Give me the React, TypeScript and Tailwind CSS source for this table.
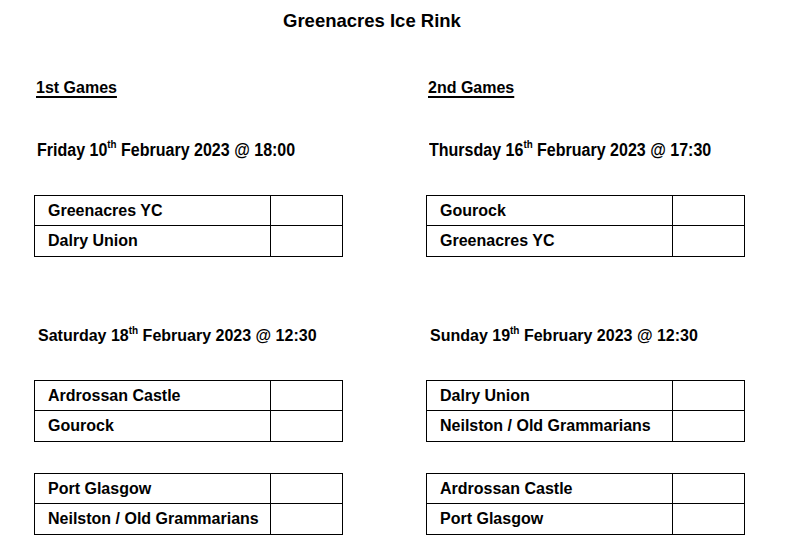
import React from "react";

type Fixture = { home: string; away: string };

type Block = {
  date: string;
  day: string;
  rest: string;
  fixtures: Fixture[];
};

const LEFT: Block[] = [
  {
    date: "Friday 10",
    day: "th",
    rest: " February 2023 @ 18:00",
    fixtures: [{ home: "Greenacres YC", away: "Dalry Union" }],
  },
  {
    date: "Saturday 18",
    day: "th",
    rest: " February 2023 @ 12:30",
    fixtures: [
      { home: "Ardrossan Castle", away: "Gourock" },
      { home: "Port Glasgow", away: "Neilston / Old Grammarians" },
    ],
  },
];

const RIGHT: Block[] = [
  {
    date: "Thursday 16",
    day: "th",
    rest: " February 2023 @ 17:30",
    fixtures: [{ home: "Gourock", away: "Greenacres YC" }],
  },
  {
    date: "Sunday 19",
    day: "th",
    rest: " February 2023 @ 12:30",
    fixtures: [
      { home: "Dalry Union", away: "Neilston / Old Grammarians" },
      { home: "Ardrossan Castle", away: "Port Glasgow" },
    ],
  },
];

function ScoreTable({ fixture, wide }: { fixture: Fixture; wide: boolean }) {
  const cols = wide ? "grid-cols-[245px_72px]" : "grid-cols-[235px_72px]";
  return (
    <div className={`border border-black text-[16px] font-bold ${wide ? "w-[319px]" : "w-[309px]"}`}>
      <div className={`grid h-[29px] ${cols}`}>
        <div className="pl-[13px] leading-[29px]">{fixture.home}</div>
        <div className="border-l border-black" />
      </div>
      <div className={`grid h-[31px] border-t border-black ${cols}`}>
        <div className="pl-[13px] leading-[30px]">{fixture.away}</div>
        <div className="border-l border-black" />
      </div>
    </div>
  );
}

function Column({ heading, blocks, wide }: { heading: string; blocks: Block[]; wide: boolean }) {
  const [first, second] = blocks;
  return (
    <div className={wide ? "w-[319px]" : "w-[392px]"}>
      {/* Section heading */}
      <h2 className="mt-[46px] pl-[2px] text-[16px] font-bold leading-[20px] underline decoration-[1.5px] underline-offset-[3px]">
        {heading}
      </h2>

      {/* First game day, condensed */}
      <div className="mt-[41px] h-[22px] pl-[3px] whitespace-nowrap">
        <span className="inline-block origin-left scale-x-[0.89] text-[18px] font-bold leading-[22px]">
          {first.date}
          <sup className="top-[-8px] text-[11px]">{first.day}</sup>
          {first.rest}
        </span>
      </div>
      <div className="mt-[34px]">
        <ScoreTable fixture={first.fixtures[0]} wide={wide} />
      </div>

      {/* Second game day */}
      <div className="mt-[69px] pl-[4px] text-[16px] font-bold leading-[20px] whitespace-nowrap">
        {second.date}
        <sup className="top-[-7px] text-[10px]">{second.day}</sup>
        {second.rest}
      </div>
      <div className="mt-[34px]">
        <ScoreTable fixture={second.fixtures[0]} wide={wide} />
      </div>
      <div className="mt-[31px]">
        <ScoreTable fixture={second.fixtures[1]} wide={wide} />
      </div>
    </div>
  );
}

export default function App() {
  return (
    <div
      className="h-[536px] w-[812px] overflow-hidden bg-white text-black"
      style={{ fontFamily: '"Liberation Sans", Arial, sans-serif' }}
    >
      <h1 className="pl-[283px] pt-[10px] text-[18.5px] font-bold leading-[22px]">Greenacres Ice Rink</h1>
      <div className="flex pl-[34px]">
        <Column heading="1st Games" blocks={LEFT} wide={false} />
        <Column heading="2nd Games" blocks={RIGHT} wide={true} />
      </div>
    </div>
  );
}
